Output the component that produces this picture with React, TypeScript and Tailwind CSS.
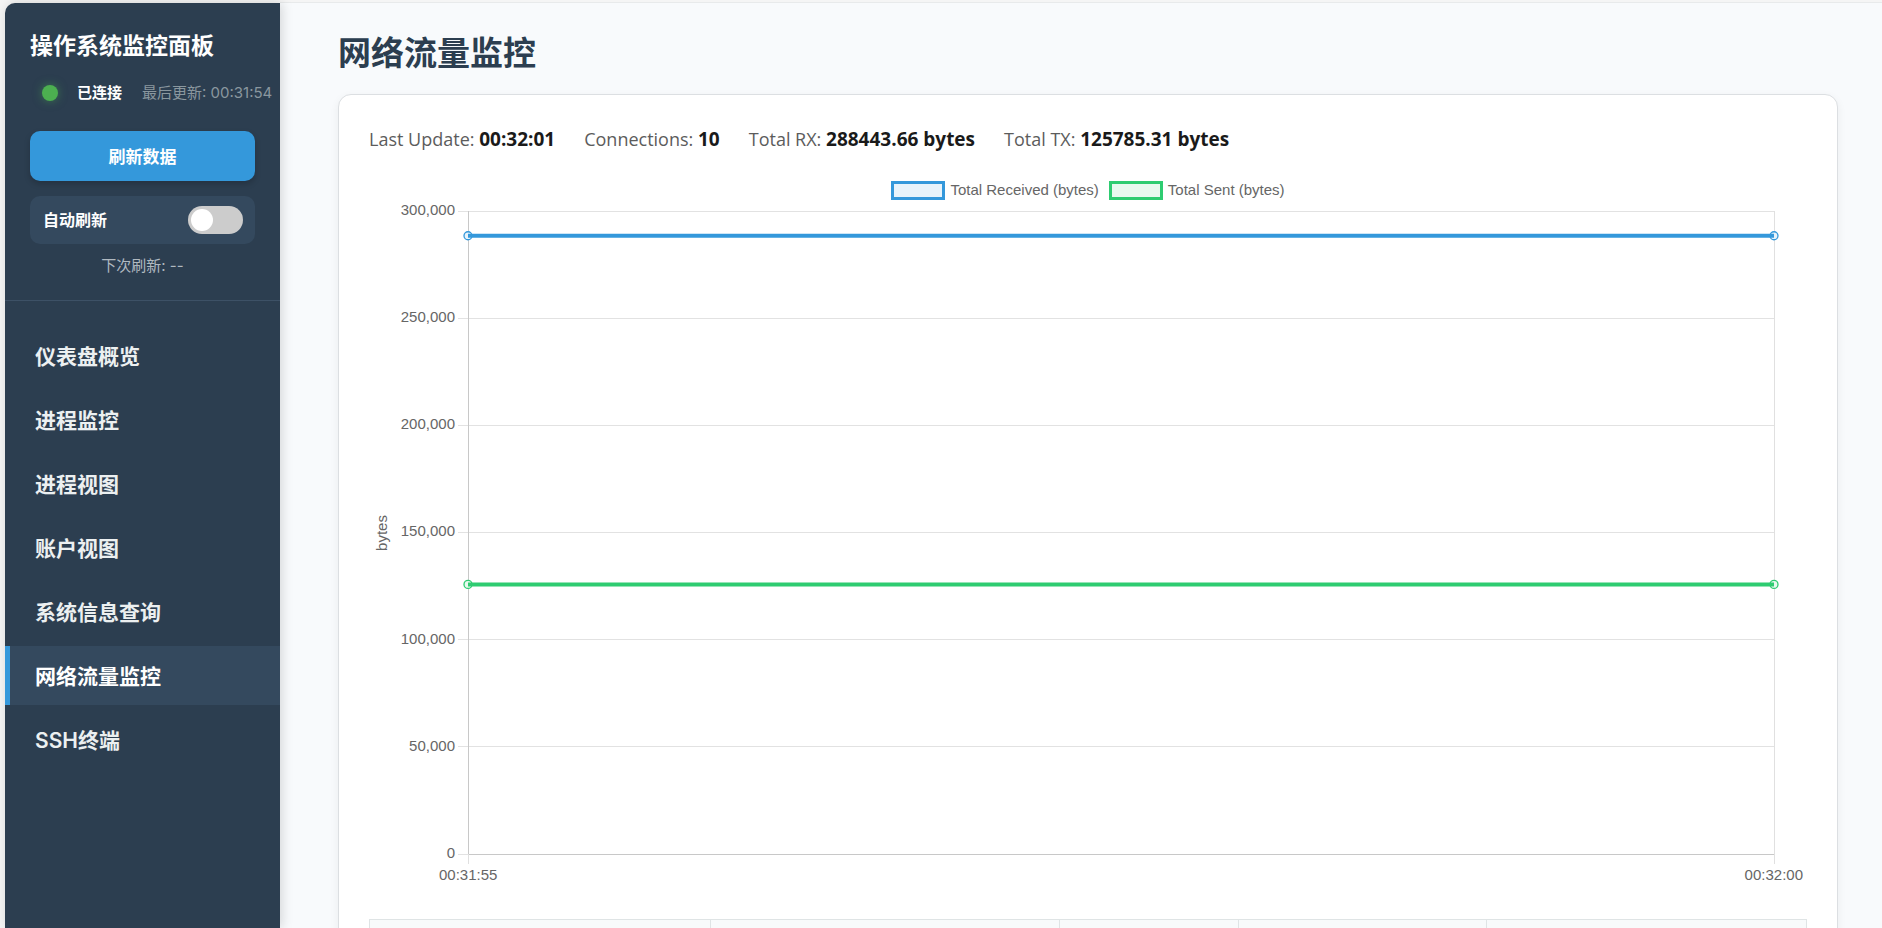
import { useState } from 'react';

const navItems = [
  '仪表盘概览',
  '进程监控',
  '进程视图',
  '账户视图',
  '系统信息查询',
  '网络流量监控',
  'SSH终端',
];

const stats = [
  { label: 'Last Update:', value: '00:32:01' },
  { label: 'Connections:', value: '10' },
  { label: 'Total RX:', value: '288443.66 bytes' },
  { label: 'Total TX:', value: '125785.31 bytes' },
];

const AXIS_MAX = 300000;
const ticks = [300000, 250000, 200000, 150000, 100000, 50000, 0];
const times = ['00:31:55', '00:32:00'];
const series = [
  { name: 'received', value: 288443.66, stroke: '#3498db', fill: '#e7f3fb' },
  { name: 'sent', value: 125785.31, stroke: '#2ecc71', fill: '#e8f9ef' },
];

const percent = (value: number) => `${(1 - value / AXIS_MAX) * 100}%`;

function Sidebar() {
  const [auto, setAuto] = useState(false);
  const [active, setActive] = useState(5);

  return (
    <aside className="z-10 flex w-[275px] shrink-0 flex-col rounded-tl-[10px] bg-[#2c3e50] font-['Inter','Noto_Sans_CJK_SC',sans-serif] text-white shadow-[2px_0_12px_rgba(0,0,0,0.15)]">
      <div className="flex flex-col border-b border-[#3d5166] px-[25px] pt-[26px] pb-[23px]">
        <h2 className="text-[23px] leading-[34px] font-bold whitespace-nowrap">操作系统监控面板</h2>
        <div className="mt-[19px] flex h-[22px] items-center pl-[12px] text-[15px] whitespace-nowrap">
          <span className="size-[16px] shrink-0 rounded-full bg-[#4caf50] shadow-[0_0_10px_rgba(76,175,80,0.5)]" />
          <span className="ml-[19px] font-semibold">已连接</span>
          <span className="ml-[20px] text-[#8a979f]">最后更新: 00:31:54</span>
        </div>
        <button
          type="button"
          className="mt-[27px] h-[50px] rounded-[10px] bg-[#3498db] pt-[4px] text-[17px] font-semibold shadow-[0_3px_6px_rgba(0,0,0,0.2)]"
        >
          刷新数据
        </button>
        <label className="mt-[15px] flex h-[48px] items-center justify-between rounded-[10px] bg-[#34495e] pr-[12px] pl-[13px] text-[16px] font-semibold">
          自动刷新
          <input
            type="checkbox"
            checked={auto}
            onChange={() => setAuto(!auto)}
            className="h-[28px] w-[55px] appearance-none rounded-full bg-[#ccc] p-[3px] before:block before:size-[22px] before:rounded-full before:bg-white checked:bg-[#3498db] checked:before:ml-[27px]"
          />
        </label>
        <p className="mt-[11px] text-center text-[15px] leading-[22px] text-[#b0b9c0]">下次刷新: --</p>
      </div>
      <nav className="flex flex-col gap-[5px] pt-[25px]">
        {navItems.map((item, i) => (
          <a
            key={item}
            href="#"
            onClick={() => setActive(i)}
            className={
              i === active
                ? 'flex h-[59px] items-center border-l-[5px] border-[#3498db] bg-[#34495e] pt-[2px] pl-[25px] text-[21px] font-semibold text-white'
                : 'flex h-[59px] items-center border-l-[5px] border-transparent pt-[2px] pl-[25px] text-[21px] font-semibold text-[#ecf0f1]'
            }
          >
            {item}
          </a>
        ))}
      </nav>
    </aside>
  );
}

function Legend() {
  return (
    <div className="flex h-[20px] items-center justify-center gap-[10px]">
      <div className="flex items-center gap-[5px]">
        <span className="h-[19px] w-[54px] border-[3px] border-[#3498db] bg-[#e7f3fb]" />
        Total Received (bytes)
      </div>
      <div className="flex items-center gap-[5px]">
        <span className="h-[19px] w-[54px] border-[3px] border-[#2ecc71] bg-[#e8f9ef]" />
        Total Sent (bytes)
      </div>
    </div>
  );
}

function Chart() {
  return (
    <div className="font-['Liberation_Sans',sans-serif] text-[15px] leading-[18px] text-[#666]">
      <Legend />
      <div className="mt-[11px] flex h-[643px] pr-[33px]">
        <div className="flex w-[26px] items-center justify-center">
          <span className="-rotate-90">bytes</span>
        </div>
        <div className="-mt-[10px] -mb-[8px] flex w-[60px] flex-col justify-between text-right">
          {ticks.map((t) => (
            <span key={t}>{t.toLocaleString('en-US')}</span>
          ))}
        </div>
        <div className="ml-[13px] min-w-0 flex-1">
          <svg className="block h-full w-full overflow-visible" shapeRendering="crispEdges">
            {ticks.map((t) => (
              <g key={t} stroke="#e2e2e2">
                <line x1="-10" x2="100%" y1={percent(t)} y2={percent(t)} />
              </g>
            ))}
            <line x1="100%" x2="100%" y1="0" y2="100%" stroke="#e0e0e0" />
            <line x1="0" x2="0" y1="0" y2="100%" stroke="#c8c8c8" />
            <line x1="0" x2="100%" y1="100%" y2="100%" stroke="#c8c8c8" />
            <svg y="100%" className="overflow-visible">
              <line x1="0" x2="0" y1="0" y2="10" stroke="#e0e0e0" />
              <line x1="100%" x2="100%" y1="0" y2="10" stroke="#e0e0e0" />
            </svg>
            {series.map((s) => (
              <g key={s.name} stroke={s.stroke} shapeRendering="auto">
                <circle cx="0" cy={percent(s.value)} r="4" fill={s.fill} strokeWidth="1.3" />
                <circle cx="100%" cy={percent(s.value)} r="4" fill={s.fill} strokeWidth="1.3" />
                <line x1="0" x2="100%" y1={percent(s.value)} y2={percent(s.value)} strokeWidth="4" />
              </g>
            ))}
          </svg>
        </div>
      </div>
      <div className="mt-[12px] flex justify-between pr-[4px] pl-[70px]">
        {times.map((t) => (
          <span key={t}>{t}</span>
        ))}
      </div>
    </div>
  );
}

export default function App() {
  return (
    <div className="flex h-screen overflow-hidden bg-[#f5f5f5] pt-[3px] pl-[5px]">
      <Sidebar />
      <main className="min-w-0 flex-1 overflow-hidden bg-[#f8fafc] pt-[26px] pr-[44px] pl-[58px] shadow-[0_-1px_0_#e8eaeb]">
        <h1 className="font-['Inter','Noto_Sans_CJK_SC',sans-serif] text-[33px] leading-[48px] font-bold text-[#2c3e50]">
          网络流量监控
        </h1>
        <section className="mt-[17px] rounded-[13px] border border-[#dcdfe2] bg-white px-[30px] pt-[29px] pb-[30px] shadow-[0_3px_10px_rgba(0,0,0,0.06)]">
          <div className="flex gap-[29px] font-['Open_Sans',sans-serif] text-[18px] leading-[30px] whitespace-nowrap text-[#5c5c5c]">
            {stats.map((s) => (
              <span key={s.label}>
                {s.label} <strong className="text-[19px] font-bold text-[#1a1a1a]">{s.value}</strong>
              </span>
            ))}
          </div>
          <div className="mt-[26px]">
            <Chart />
          </div>
          <table className="mt-[35px] w-full table-fixed border-collapse">
            <colgroup>
              <col className="w-[23.7%]" />
              <col className="w-[24.3%]" />
              <col className="w-[12.5%]" />
              <col className="w-[17.2%]" />
              <col className="w-[22.3%]" />
            </colgroup>
            <thead>
              <tr className="h-[52px] bg-[#f8fafb]">
                <th className="border border-[#dfe4e5]" />
                <th className="border border-[#dfe4e5]" />
                <th className="border border-[#dfe4e5]" />
                <th className="border border-[#dfe4e5]" />
                <th className="border border-[#dfe4e5]" />
              </tr>
            </thead>
          </table>
        </section>
      </main>
    </div>
  );
}
